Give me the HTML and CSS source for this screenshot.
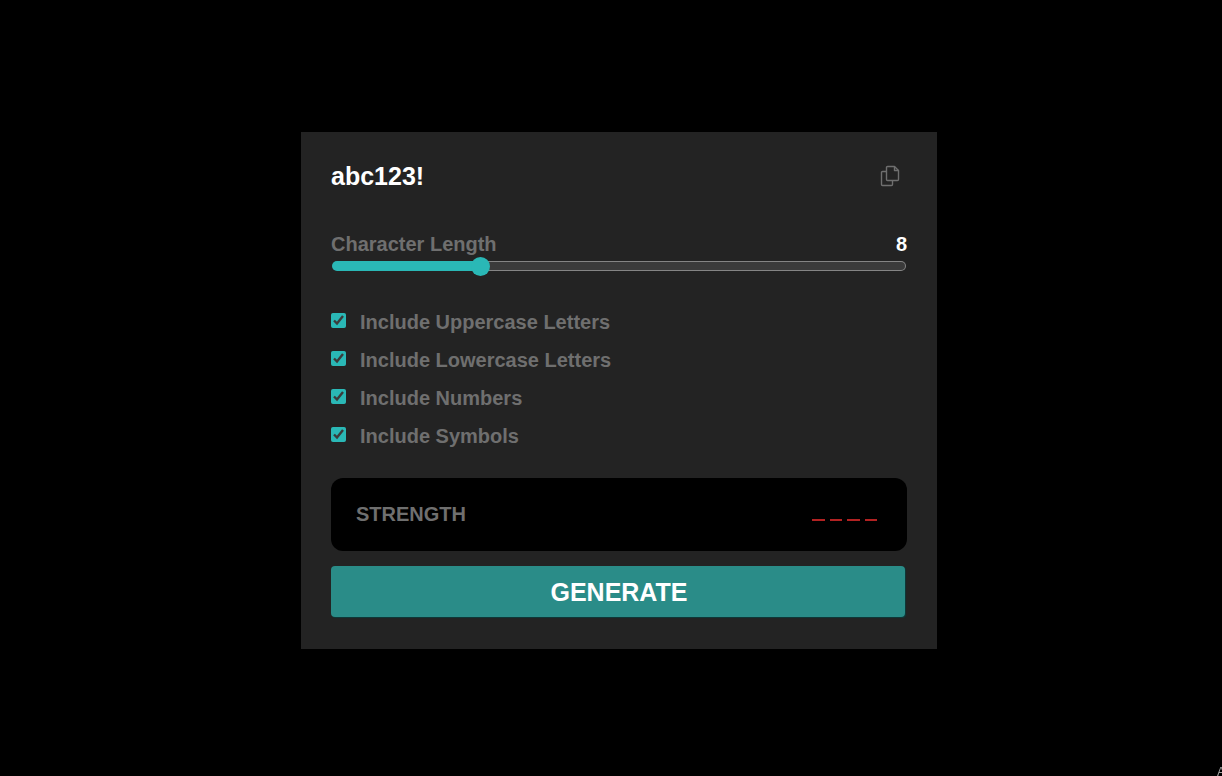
FILE: index.html
```html
<!DOCTYPE html>
<html lang="en">
<head>
<meta charset="utf-8">
<meta name="viewport" content="width=device-width, initial-scale=1">
<title>Password Generator</title>
<link rel="stylesheet" href="styles.css">
</head>
<body>
<main class="card">
  <header class="result">
    <h1 class="password">abc123!</h1>
    <button class="copy" type="button" aria-label="Copy password">
      <svg class="copy-icon" viewBox="0 0 20 22" fill="none" stroke="currentColor" stroke-width="1.4" stroke-linejoin="round" aria-hidden="true">
        <path d="M6.5 6.5H2.5a1 1 0 0 0-1 1v12a1 1 0 0 0 1 1h9a1 1 0 0 0 1-1v-4"/>
        <path d="M7.5 1.5H14.5l4 4v9a1 1 0 0 1-1 1h-10a1 1 0 0 1-1-1v-12a1 1 0 0 1 1-1z"/>
        <path d="M14.5 1.5V5.5h4"/>
      </svg>
    </button>
  </header>
  <div class="length">
    <div class="length-row">
      <label for="length">Character Length</label>
      <output class="length-value" for="length">8</output>
    </div>
    <input class="slider" id="length" type="range" min="4" max="20" value="8">
  </div>
  <div class="options">
    <label class="option"><input class="tick" type="checkbox" checked>Include Uppercase Letters</label>
    <label class="option"><input class="tick" type="checkbox" checked>Include Lowercase Letters</label>
    <label class="option"><input class="tick" type="checkbox" checked>Include Numbers</label>
    <label class="option"><input class="tick" type="checkbox" checked>Include Symbols</label>
  </div>
  <div class="strength">
    <span>STRENGTH</span>
    <div class="bars"><i class="bar"></i><i class="bar"></i><i class="bar"></i><i class="bar"></i></div>
  </div>
  <button class="generate" type="button">GENERATE</button>
</main>
<span class="corner" aria-hidden="true">A</span>
</body>
</html>
```
FILE: styles.css
```css
* {
  box-sizing: border-box;
}

body {
  display: flex;
  align-items: center;
  justify-content: center;
  min-height: 100vh;
  margin: 0;
  padding: 5px 0 0 16px;
  background: #000;
  color: #6f6f6f;
  color-scheme: dark;
  font: bold 20px/24px "Liberation Sans", Arial, sans-serif;
}

.card {
  width: 100%;
  max-width: 636px;
  padding: 28px 30px 32px;
  background: #232323;
}

.result {
  display: flex;
  align-items: center;
  justify-content: space-between;
  margin-bottom: 40px;
}

.password {
  margin: 0;
  color: #fff;
  font-size: 25px;
  line-height: 32px;
}

.copy {
  display: flex;
  padding: 0 7px;
  border: 0;
  background: none;
  color: #6f6f6f;
}

.copy-icon {
  width: 20px;
  height: 22px;
}

.length-row {
  display: flex;
  justify-content: space-between;
}

.length-value {
  color: #fff;
}

.slider {
  display: block;
  width: 100%;
  height: 20px;
  margin: 0;
  appearance: none;
  background: none;
}

.slider::-webkit-slider-runnable-track {
  height: 10px;
  margin: 0 1px;
  border: 1px solid transparent;
  border-radius: 5px;
  background:
    linear-gradient(to right, #2ab8b6 25%, transparent 25%) border-box,
    linear-gradient(#3b3b3b, #3b3b3b) padding-box,
    linear-gradient(#858585, #858585) border-box;
}

.slider::-webkit-slider-thumb {
  width: 19px;
  height: 19px;
  margin-top: -5px;
  appearance: none;
  border-radius: 50%;
  background: #2ab8b6;
}

.options {
  display: grid;
  gap: 14px;
  margin: 34px 0 30px;
}

.option {
  display: flex;
  align-items: center;
  gap: 14px;
}

.tick {
  width: 15px;
  height: 15px;
  margin: 0 0 4px;
  accent-color: #2ab8b6;
}

.strength {
  display: flex;
  align-items: center;
  justify-content: space-between;
  padding: 24px 30px 25px 25px;
  border-radius: 12px;
  background: #000;
}

.bars {
  display: flex;
  gap: 5px;
  width: 65px;
  padding-top: 12px;
}

.bar {
  flex: 1;
  height: 2px;
  background: #b22222;
}

.generate {
  display: block;
  width: calc(100% - 2px);
  margin-top: 15px;
  padding: 11px 9px 9px 11px;
  border: 0;
  border-radius: 4px;
  background: #2a8c88;
  box-shadow: 1px 1px 1px #0d3a3a;
  color: #fff;
  font: inherit;
  font-size: 25px;
  line-height: 31px;
}

.corner {
  position: fixed;
  right: 0;
  bottom: 0;
  width: 5px;
  height: 9px;
  overflow: hidden;
  color: #a0a0a0;
  font-size: 12px;
  font-weight: normal;
  line-height: 11px;
}
```
